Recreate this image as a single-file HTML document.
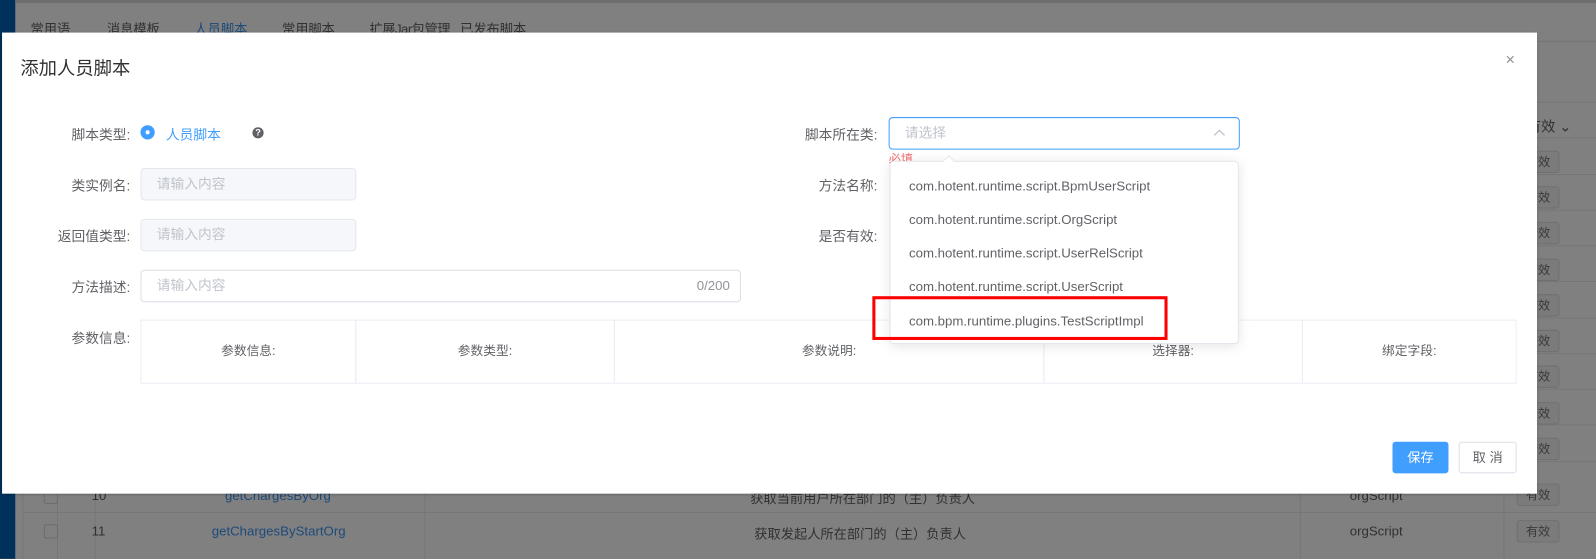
<!DOCTYPE html>
<html><head><meta charset="utf-8"><style>
*{box-sizing:border-box;margin:0;padding:0}
html,body{width:1596px;height:549px;overflow:hidden;background:#808080}
#w{position:absolute;left:0;top:0;width:1568px;height:540px;transform:scale(1.0179);transform-origin:0 0;font-family:"Liberation Sans","Noto Sans CJK SC",sans-serif;font-size:14px;color:#606266}
.a{position:absolute}
.bgt{color:#303030;font-size:13px}
.yx{position:absolute;left:1490px;width:42px;height:22px;border:1px solid #707070;background:#7b7b7b;border-radius:3px;color:#3a3a3a;font-size:12px;text-align:center;line-height:20px}
.hl{position:absolute;height:1px;background:#767676}
.lbl{position:absolute;text-align:right;width:120px;color:#606266;font-size:13.5px}
.inp{position:absolute;height:32px;border:1px solid #dcdfe6;border-radius:4px;color:#c0c4cc;padding-left:15px;line-height:30px;font-size:13.5px}
.dis{background:#f5f7fa;border-color:#e4e7ed}
.it{position:absolute;left:893px;color:#606266;font-size:13px}
.th{position:absolute;top:314px;height:63px;border:1px solid #ebeef5;text-align:center;line-height:61px;font-size:12.5px;color:#606266}
</style></head><body><div id="w">
<div class="a" style="left:0;top:0;width:15px;height:549px;background:#00315b"></div>
<div class="a" style="left:15px;top:0;width:1581px;height:3px;background:#6e6e6e"></div>
<div class="a bgt" style="left:30px;top:18px">常用语</div>
<div class="a bgt" style="left:105px;top:18px">消息模板</div>
<div class="a bgt" style="left:191px;top:18px;color:#1d4a7a">人员脚本</div>
<div class="a bgt" style="left:277px;top:18px">常用脚本</div>
<div class="a bgt" style="left:363px;top:18px;letter-spacing:-0.5px">扩展Jar包管理</div>
<div class="a bgt" style="left:452px;top:18px">已发布脚本</div>
<div class="hl" style="left:1510px;top:40px;width:86px;background:#747474"></div>
<div class="a bgt" style="left:1500px;top:114px;font-size:14px">有效 ⌄</div>
<div class="hl" style="left:22px;top:100px;width:1574px"></div>
<div class="hl" style="left:22px;top:135px;width:1574px"></div>
<div class="hl" style="left:22px;top:171px;width:1574px"></div>
<div class="hl" style="left:22px;top:206px;width:1574px"></div>
<div class="hl" style="left:22px;top:241px;width:1574px"></div>
<div class="hl" style="left:22px;top:276px;width:1574px"></div>
<div class="hl" style="left:22px;top:312px;width:1574px"></div>
<div class="hl" style="left:22px;top:347px;width:1574px"></div>
<div class="hl" style="left:22px;top:382px;width:1574px"></div>
<div class="hl" style="left:22px;top:417px;width:1574px"></div>
<div class="hl" style="left:22px;top:453px;width:1574px"></div>
<div class="hl" style="left:22px;top:503px;width:1574px"></div>
<div class="a" style="left:1477px;top:100px;width:1px;height:449px;background:#767676"></div>
<div class="a" style="left:1277px;top:100px;width:1px;height:449px;background:#767676"></div>
<div class="a" style="left:22px;top:100px;width:1px;height:449px;background:#767676"></div>
<div class="a" style="left:56px;top:470px;width:1px;height:79px;background:#767676"></div>
<div class="a" style="left:93px;top:470px;width:1px;height:79px;background:#767676"></div>
<div class="a" style="left:417px;top:470px;width:1px;height:79px;background:#767676"></div>
<div class="yx" style="top:148px">有效</div><div class="yx" style="top:183px">有效</div><div class="yx" style="top:218px">有效</div><div class="yx" style="top:254px">有效</div><div class="yx" style="top:289px">有效</div><div class="yx" style="top:324px">有效</div><div class="yx" style="top:359px">有效</div><div class="yx" style="top:395px">有效</div><div class="yx" style="top:430px">有效</div><div class="yx" style="top:475px">有效</div><div class="yx" style="top:511px">有效</div>
<div class="a" style="left:43px;top:481px;width:14px;height:14px;border:1px solid #6c6c6c;border-radius:2px"></div>
<div class="a" style="left:43px;top:515px;width:14px;height:14px;border:1px solid #6c6c6c;border-radius:2px"></div>
<div class="a bgt" style="left:90px;top:479px">10</div>
<div class="a bgt" style="left:90px;top:514px">11</div>
<div class="a bgt" style="left:221px;top:479px;color:#1d4a7a">getChargesByOrg</div>
<div class="a bgt" style="left:208px;top:514px;color:#1d4a7a">getChargesByStartOrg</div>
<div class="a bgt" style="left:737px;top:479px">获取当前用户所在部门的（主）负责人</div>
<div class="a bgt" style="left:741px;top:514px">获取发起人所在部门的（主）负责人</div>
<div class="a bgt" style="left:1326px;top:479px">orgScript</div>
<div class="a bgt" style="left:1326px;top:514px">orgScript</div>

<div class="a" style="left:2px;top:32px;width:1508px;height:453px;background:#fff;box-shadow:0 1px 3px rgba(0,0,0,.3)"></div>
<div class="a" style="left:20px;top:53px;font-size:18px;color:#303133">添加人员脚本</div>
<div class="a" style="left:1479px;top:51px;font-size:16px;color:#909399">×</div>

<div class="lbl" style="left:8px;top:121px">脚本类型:</div>
<div class="a" style="left:138px;top:123px;width:14px;height:14px;border-radius:50%;background:#409eff"></div>
<div class="a" style="left:143px;top:128px;width:4px;height:4px;border-radius:50%;background:#fff"></div>
<div class="a" style="left:163px;top:121px;color:#409eff;font-size:13.5px">人员脚本</div>
<div class="a" style="left:248px;top:125px;width:11px;height:11px;border-radius:50%;background:#606266;color:#fff;font-size:9px;font-weight:bold;text-align:center;line-height:11px">?</div>

<div class="lbl" style="left:8px;top:171px">类实例名:</div>
<div class="inp dis" style="left:138px;top:165px;width:212px">请输入内容</div>
<div class="lbl" style="left:8px;top:221px">返回值类型:</div>
<div class="inp dis" style="left:138px;top:215px;width:212px">请输入内容</div>
<div class="lbl" style="left:8px;top:271px">方法描述:</div>
<div class="inp" style="left:138px;top:265px;width:590px">请输入内容<span style="position:absolute;right:10px;color:#909399;font-size:13px">0/200</span></div>
<div class="lbl" style="left:8px;top:321px">参数信息:</div>
<div class="th" style="left:138px;width:212px">参数信息:</div>
<div class="th" style="left:349px;width:255px">参数类型:</div>
<div class="th" style="left:603px;width:423px">参数说明:</div>
<div class="th" style="left:1025px;width:255px">选择器:</div>
<div class="th" style="left:1279px;width:211px">绑定字段:</div>

<div class="lbl" style="left:742px;top:121px">脚本所在类:</div>
<div class="inp" style="left:873px;top:115px;width:345px;border-color:#409eff">请选择</div>
<svg class="a" style="left:1192px;top:126px" width="12" height="8"><path d="M1 7L6 2L11 7" fill="none" stroke="#c0c4cc" stroke-width="1.3"/></svg>
<div class="a" style="left:873px;top:147px;color:#f56c6c;font-size:12px">必填</div>
<div class="lbl" style="left:742px;top:171px">方法名称:</div>
<div class="lbl" style="left:742px;top:221px">是否有效:</div>
<div class="a" style="left:874px;top:158px;width:343px;height:180px;background:#fff;border:1px solid #e4e7ed;border-radius:4px;box-shadow:0 2px 12px rgba(0,0,0,.1)"></div>
<div class="a" style="left:928px;top:154px;width:8px;height:8px;background:#fff;border-left:1px solid #e4e7ed;border-top:1px solid #e4e7ed;transform:rotate(45deg)"></div>
<div class="it" style="top:175px">com.hotent.runtime.script.BpmUserScript</div>
<div class="it" style="top:208px">com.hotent.runtime.script.OrgScript</div>
<div class="it" style="top:241px">com.hotent.runtime.script.UserRelScript</div>
<div class="it" style="top:274px">com.hotent.runtime.script.UserScript</div>
<div class="it" style="top:308px">com.bpm.runtime.plugins.TestScriptImpl</div>
<div class="a" style="left:857px;top:291px;width:290px;height:43px;border:3px solid #f00"></div>

<div class="a" style="left:1368px;top:434px;width:55px;height:31px;background:#409eff;border-radius:3px;color:#fff;text-align:center;line-height:31px;font-size:13px">保存</div>
<div class="a" style="left:1433px;top:434px;width:57px;height:31px;border:1px solid #dcdfe6;border-radius:3px;color:#606266;text-align:center;line-height:29px;font-size:13px">取 消</div>
</div></body></html>
